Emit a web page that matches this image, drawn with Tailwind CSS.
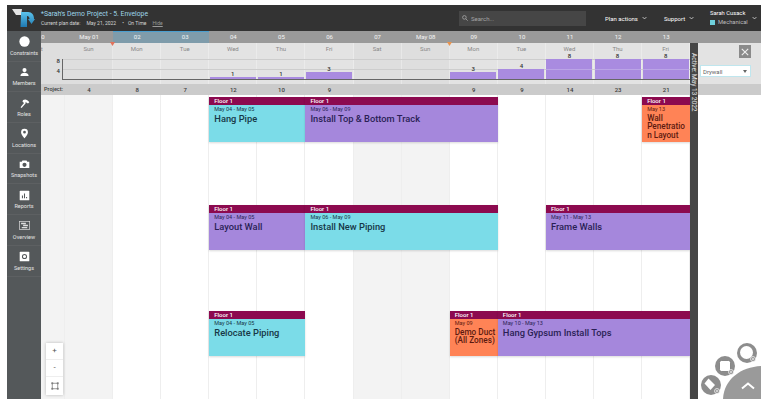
<!DOCTYPE html>
<html lang="en">
<head>
  <meta charset="UTF-8">
  <title>Sarah's Demo Project - Plan</title>
  <meta name="viewport" content="width=device-width, initial-scale=1">
  <script src="https://cdn.jsdelivr.net/npm/@tailwindcss/browser@4"></script>
</head>
<body class="bg-white font-['Roboto',sans-serif] overflow-hidden">
  <div class="ml-[7px] mt-[5px] w-[754px] h-[394px] flex flex-col overflow-hidden relative">

    <!-- top bar -->
    <header class="h-[26px] shrink-0 bg-[#333333] flex items-center text-white">
      <svg class="ml-[5px] w-[23px] h-[20px]" viewBox="0 0 23 20">
        <defs><linearGradient id="logo" x1="0" y1="0" x2="0" y2="1"><stop offset="0" stop-color="#5cc3ec"/><stop offset="1" stop-color="#1f78b0"/></linearGradient></defs>
        <path d="M0 1h10l-1 6H4z" fill="#e4e4e4"/>
        <path d="M9 4h7c4 0 6 3 6 7l1 0-3.500 5L16 11h1.500c0-2-1-3-2.500-3v11H8.500L9 7z" fill="url(#logo)"/>
      </svg>
      <div class="ml-[6px] w-[418px]">
        <div class="text-[6.8px] leading-[10px] text-[#9fd6ea]">*Sarah's Demo Project - 5. Envelope</div>
        <div class="text-[5px] leading-[8px] text-[#d5d5d5] flex gap-[6px]">
          <span>Current plan date:</span><span>May 21, 2022</span><span>•</span><span class="-ml-[2px]">On Time</span><span class="underline text-[#999]">Hide</span>
        </div>
      </div>
      <div class="w-[127px] h-[15px] bg-[#464646] flex items-center gap-[3px] pl-[3px] text-[6px] text-[#a5a5a5]">
        <svg class="w-[6px] h-[6px]" viewBox="0 0 10 10" fill="none" stroke="#a5a5a5" stroke-width="1.4"><circle cx="4" cy="4" r="3"/><path d="M6.500 6.500 9.500 9.500"/></svg>
        Search...
      </div>
      <div class="ml-[19px] w-[59px] flex items-center gap-[4px] text-[6px]">Plan actions
        <svg class="w-[5px] h-[4px]" viewBox="0 0 8 6" fill="none" stroke="#ddd" stroke-width="1.3"><path d="M1 1.500 4 4.500 7 1.500"/></svg>
      </div>
      <div class="w-[46px] flex items-center gap-[4px] text-[6px]">Support
        <svg class="w-[5px] h-[4px]" viewBox="0 0 8 6" fill="none" stroke="#ddd" stroke-width="1.3"><path d="M1 1.500 4 4.500 7 1.500"/></svg>
      </div>
      <div class="w-[42px] text-[5.8px] leading-[9px]">
        <div>Sarah Cusack</div>
        <div class="flex items-center gap-[3px] text-[#bdbdbd]"><span class="w-[5px] h-[5px] bg-[#6fd0dc]"></span>Mechanical</div>
      </div>
      <svg class="w-[5px] h-[4px]" viewBox="0 0 8 6" fill="none" stroke="#ddd" stroke-width="1.3"><path d="M1 1.500 4 4.500 7 1.500"/></svg>
    </header>

    <div class="flex-1 flex min-h-0">
      <!-- sidebar -->
      <nav id="nav" class="w-[34px] shrink-0 bg-[#54585a] flex flex-col text-[5.5px] text-[#e4e4e4] text-center"></nav>

      <main class="flex-1 relative min-w-0 flex flex-col">
        <div id="dates" class="h-[12px] shrink-0 grid grid-cols-[24px_repeat(13,48.1px)_8px_1fr] text-[6px] text-white/90 bg-[#9a9a9a]"></div>
        <div id="chart" class="h-[41px] shrink-0 grid grid-cols-[24px_repeat(13,48.1px)_8px_1fr] bg-[#e3e3e3] relative"></div>
        <div id="project" class="h-[11px] shrink-0 grid grid-cols-[24px_repeat(13,48.1px)_8px_1fr] bg-[#cbcbcb] text-[6px] font-medium text-[#3c3c3c]"></div>

        <!-- calendar -->
        <div class="flex-1 relative min-h-0">
          <div id="cols" class="absolute inset-0 grid grid-cols-[24px_repeat(13,48.1px)_8px_1fr]"></div>
          <div class="relative flex flex-col pt-[2px] text-[#2a1f55]">

            <div class="grid grid-cols-[24px_repeat(13,48.1px)_8px_1fr] h-[45px]">
              <div class="col-start-5 col-span-2 bg-[#7bdce8] text-[#173746] shadow-[0_1px_2px_rgba(0,0,0,0.15)]">
                <div class="h-[8px] bg-[#8c0a4f] text-white text-[6px] leading-[8px] font-medium pl-[5px]">Floor 1</div>
                <div class="pl-[5px] text-[5.5px] leading-[7px] mt-[0.5px]">May 04 - May 05</div>
                <div class="pl-[5px] text-[9.3px] leading-[10px] font-medium mt-[1px]">Hang Pipe</div>
              </div>
              <div class="col-span-4 col-start-7 bg-[#a587dc] -mr-[0.5px] shadow-[0_1px_2px_rgba(0,0,0,0.15)]">
                <div class="h-[8px] bg-[#8c0a4f] text-white text-[6px] leading-[8px] font-medium pl-[5px]">Floor 1</div>
                <div class="pl-[5px] text-[5.5px] leading-[7px] mt-[0.5px]">May 06 - May 09</div>
                <div class="pl-[5px] text-[9.3px] leading-[10px] font-medium mt-[1px]">Install Top &amp; Bottom Track</div>
              </div>
              <div class="col-start-14 bg-[#ff8356] text-[#5c1a10] shadow-[0_1px_2px_rgba(0,0,0,0.15)]">
                <div class="h-[8px] bg-[#8c0a4f] text-white text-[6px] leading-[8px] font-medium pl-[5px]">Floor 1</div>
                <div class="pl-[5px] text-[5.5px] leading-[7px] mt-[0.5px]">May 13</div>
                <div class="pl-[5px] pr-[3px] text-[8.2px] leading-[8.5px] font-medium break-words mt-[1px]">Wall Penetration Layout</div>
              </div>
            </div>

            <div class="grid grid-cols-[24px_repeat(13,48.1px)_8px_1fr] h-[45px] mt-[63px]">
              <div class="col-start-5 col-span-2 bg-[#a587dc] shadow-[0_1px_2px_rgba(0,0,0,0.15)]">
                <div class="h-[8px] bg-[#8c0a4f] text-white text-[6px] leading-[8px] font-medium pl-[5px]">Floor 1</div>
                <div class="pl-[5px] text-[5.5px] leading-[7px] mt-[0.5px]">May 04 - May 05</div>
                <div class="pl-[5px] text-[9.3px] leading-[10px] font-medium mt-[1px]">Layout Wall</div>
              </div>
              <div class="col-span-4 col-start-7 bg-[#7bdce8] text-[#173746] -mr-[0.5px] shadow-[0_1px_2px_rgba(0,0,0,0.15)]">
                <div class="h-[8px] bg-[#8c0a4f] text-white text-[6px] leading-[8px] font-medium pl-[5px]">Floor 1</div>
                <div class="pl-[5px] text-[5.5px] leading-[7px] mt-[0.5px]">May 06 - May 09</div>
                <div class="pl-[5px] text-[9.3px] leading-[10px] font-medium mt-[1px]">Install New Piping</div>
              </div>
              <div class="col-start-12 col-span-3 bg-[#a587dc] shadow-[0_1px_2px_rgba(0,0,0,0.15)]">
                <div class="h-[8px] bg-[#8c0a4f] text-white text-[6px] leading-[8px] font-medium pl-[5px]">Floor 1</div>
                <div class="pl-[5px] text-[5.5px] leading-[7px] mt-[0.5px]">May 11 - May 13</div>
                <div class="pl-[5px] text-[9.3px] leading-[10px] font-medium mt-[1px]">Frame Walls</div>
              </div>
            </div>

            <div class="grid grid-cols-[24px_repeat(13,48.1px)_8px_1fr] h-[45px] mt-[61px]">
              <div class="col-start-5 col-span-2 bg-[#7bdce8] text-[#173746] shadow-[0_1px_2px_rgba(0,0,0,0.15)]">
                <div class="h-[8px] bg-[#8c0a4f] text-white text-[6px] leading-[8px] font-medium pl-[5px]">Floor 1</div>
                <div class="pl-[5px] text-[5.5px] leading-[7px] mt-[0.5px]">May 04 - May 05</div>
                <div class="pl-[5px] text-[9.3px] leading-[10px] font-medium mt-[1px]">Relocate Piping</div>
              </div>
              <div class="col-start-10 bg-[#ff8356] text-[#5c1a10] shadow-[0_1px_2px_rgba(0,0,0,0.15)]">
                <div class="h-[8px] bg-[#8c0a4f] text-white text-[6px] leading-[8px] font-medium pl-[5px]">Floor 1</div>
                <div class="pl-[5px] text-[5.5px] leading-[7px] mt-[0.5px]">May 09</div>
                <div class="pl-[5px] text-[8.2px] leading-[8.5px] font-medium whitespace-nowrap mt-[1px]">Demo Duct<br>(All Zones)</div>
              </div>
              <div class="col-start-11 col-span-4 bg-[#a587dc] shadow-[0_1px_2px_rgba(0,0,0,0.15)]">
                <div class="h-[8px] bg-[#8c0a4f] text-white text-[6px] leading-[8px] font-medium pl-[5px]">Floor 1</div>
                <div class="pl-[5px] text-[5.5px] leading-[7px] mt-[0.5px]">May 10 - May 13</div>
                <div class="pl-[5px] text-[9.3px] leading-[10px] font-medium mt-[1px]">Hang Gypsum Install Tops</div>
              </div>
            </div>
          </div>

          <!-- zoom buttons -->
          <div class="absolute left-[5px] top-[248px] w-[17px] h-[52px] bg-white shadow-[0_0_3px_rgba(0,0,0,0.25)] flex flex-col items-center text-[8px] text-[#555]">
            <div class="h-[17px] w-full flex items-center justify-center border-b border-[#eee]">+</div>
            <div class="h-[17px] w-full flex items-center justify-center border-b border-[#eee]">-</div>
            <div class="flex-1 flex items-center justify-center">
              <svg class="w-[8px] h-[8px]" viewBox="0 0 10 10" fill="none" stroke="#777" stroke-width="0.9"><rect x="1.500" y="1.500" width="7" height="7"/><path d="M0 1.500h3M1.500 0v3M7 1.500h3M8.500 0v3M0 8.500h3M1.500 7v3M7 8.500h3M8.500 7v3"/></svg>
            </div>
          </div>
        </div>

        <!-- active date bar -->
        <div class="absolute left-[649px] top-[12px] bottom-0 w-[8px] bg-[#454545] z-10">
          <div class="[writing-mode:vertical-rl] text-[6.5px] leading-[8px] text-[#e8e8e8] pt-[10px] whitespace-nowrap">Active: May 13 2022</div>
        </div>

        <!-- close + trade filter -->
        <div class="absolute left-[698px] top-[14px] w-[12px] h-[13px] bg-[#8a8a8a] flex items-center justify-center z-10">
          <svg class="w-[8px] h-[8px]" viewBox="0 0 10 10" stroke="#eee" stroke-width="1.4"><path d="M1 1 9 9M9 1 1 9"/></svg>
        </div>
        <div class="absolute left-[659px] top-[34px] w-[51px] h-[12px] bg-white border border-[#bfe6ee] flex items-center justify-between px-[2px] text-[6px] text-[#666] z-10">
          Drywall
          <svg class="w-[4px] h-[3px] mr-[1px]" viewBox="0 0 4 3" fill="#666"><path d="M0 0h4L2 3z"/></svg>
        </div>

        <!-- date markers -->
        <svg class="absolute left-[69px] top-[11px] w-[5px] h-[4px] z-10" viewBox="0 0 5 4" fill="#e2725b"><path d="M0 0h5L2.500 4z"/></svg>
        <svg class="absolute left-[406px] top-[11px] w-[5px] h-[4px] z-10" viewBox="0 0 5 4" fill="#e8934f"><path d="M0 0h5L2.500 4z"/></svg>
      </main>
    </div>

    <!-- quick add menu -->
    <svg class="absolute right-0 bottom-0 w-[62px] h-[58px]" viewBox="0 0 62 58" fill="none">
      <path d="M62 58H24C25 38 42 26 62 25z" fill="#9a9a9a"/>
      <path d="M43 47.500l6-5 6 5" stroke="#fff" stroke-width="2"/>
      <circle cx="12" cy="44" r="10" fill="#8d8d8d"/>
      <path d="M9.500 37.500l6.500 6.500-4.500 5-6-6.500z" fill="#fff"/>
      <circle cx="26" cy="25" r="10" fill="#8d8d8d"/>
      <rect x="20.500" y="19.500" width="11" height="11" rx="2" fill="#fff" stroke="#6d6d6d" stroke-width="0.7"/>
      <circle cx="48" cy="12" r="10" fill="#8d8d8d"/>
      <circle cx="47.500" cy="11.500" r="6.500" fill="#fff"/>
      <g stroke="#fff" stroke-width="0.7">
        <circle cx="18" cy="50" r="2.500" fill="#8d8d8d"/><path d="M16.800 50h2.400M18 48.800v2.400"/>
        <circle cx="32" cy="31" r="2.500" fill="#8d8d8d"/><path d="M30.800 31h2.400M32 29.800v2.400"/>
        <circle cx="54" cy="18" r="2.500" fill="#8d8d8d"/><path d="M52.800 18h2.400M54 16.800v2.400"/>
      </g>
    </svg>
  </div>

  <script>
    // sidebar
    const icons = {
      Constraints: '<circle cx="8" cy="8" r="7.500" fill="#fff"/>',
      Members: '<circle cx="8" cy="4.500" r="3" fill="#fff"/><path d="M2 13c0-3 3-4.500 6-4.500s6 1.500 6 4.500z" fill="#fff"/>',
      Roles: '<path d="M3 14 9 7" stroke="#fff" stroke-width="2"/><path d="M6 3c3-2 6-1 9 3l-2 2-3-2-2 2-3-3z" fill="#fff"/>',
      Locations: '<path fill-rule="evenodd" d="M8 1a5 5 0 0 1 5 5c0 3.500-5 9-5 9S3 9.500 3 6a5 5 0 0 1 5-5zm0 3a2 2 0 1 0 0 4 2 2 0 0 0 0-4z" fill="#fff"/>',
      Snapshots: '<path fill-rule="evenodd" d="M1 4h3l1-2h6l1 2h3v9H1zm7 1.500a3 3 0 1 0 0 6 3 3 0 0 0 0-6z" fill="#fff"/>',
      Reports: '<rect x="1" y="1" width="14" height="14" rx="1" fill="#fff"/><path d="M5 8v4M8 5v7M11 10v2" stroke="#54585a" stroke-width="1.500"/>',
      Overview: '<rect x="0.500" y="2" width="15" height="12" fill="none" stroke="#ddd"/><path d="M3 5h7M6 8h7M4 11h8" stroke="#ddd" stroke-width="2"/>',
      Settings: '<rect x="1" y="1" width="14" height="14" rx="1" fill="#fff"/><circle cx="8" cy="8" r="3" fill="none" stroke="#54585a" stroke-width="1.500"/>'
    };
    document.getElementById("nav").innerHTML = Object.keys(icons).map(name => `
      <div class="h-[30.7px] flex flex-col items-center justify-end pb-[4px] gap-[2.5px] border-b border-white/5">
        <svg class="w-[11px] h-[11px]" viewBox="0 0 16 16">${icons[name]}</svg>
        <span class="leading-[7px]">${name}</span>
      </div>`).join("");

    // one entry per grid column: partial Sat, then May 01 - May 13
    const dates = ["May 01","02","03","04","05","06","07","May 08","09","10","11","12","13"];
    const days = ["Sun","Mon","Tue","Wed","Thu","Fri","Sat","Sun","Mon","Tue","Wed","Thu","Fri"];
    const loads = [0,0,0,1,1,3,0,0,3,4,8,8,8];
    const totals = ["4","8","7","12","10","9","","","9","9","14","23","21"];

    document.getElementById("dates").innerHTML =
      '<div class="overflow-hidden leading-[12px]"><span class="-ml-[3px] inline-block">30</span></div>' +
      dates.map((d, i) => `<div class="text-center leading-[12px] ${i == 1 || i == 2 ? "bg-[#7f9cab] shadow-[inset_0_1px_0_#4a9fd0]" : ""}">${d}</div>`).join("");

    document.getElementById("chart").innerHTML = `
      <div class="overflow-hidden text-[6px] leading-[11px] text-[#888] bg-[#dedede] relative">
        <span class="-ml-[7px] inline-block">Sat</span>
        <span class="absolute right-[5px] top-[12px] text-[#333] font-medium">8</span>
        <span class="absolute right-[5px] top-[22px] text-[#333] font-medium">4</span>
      </div>` +
      days.map((d, i) => {
        const v = loads[i];
        const h = {1: "h-[2.5px]", 3: "h-[7.5px]", 4: "h-[10px]", 8: "h-[20px]"}[v];
        const shade = i == 0 || i == 6 || i == 7 ? "bg-[#dedede]" : "";
        return `<div class="flex flex-col ${shade} border-r border-white/30">
          <div class="h-[16px] shrink-0 text-center text-[6px] leading-[11px] text-[#888]">${d}</div>
          <div class="h-[20px] shrink-0 flex flex-col justify-end items-center relative z-[2]">
            ${v ? `<span class="text-[6px] leading-[7px] font-medium text-[#333]">${v}</span><div class="${h} w-[46px] shrink-0 bg-[#a98be0] relative">${v == 8 ? '<div class="absolute left-0 right-0 top-[10px] h-px bg-[#bba5e6]"></div>' : ""}</div>` : ""}
          </div>
        </div>`;
      }).join("") +
      `<div class="bg-[#454545]"></div><div class="bg-[#e3e3e3]"></div>
      <div class="absolute left-[21px] w-[628px] top-[16px] h-px bg-[#cdcdcd]"></div>
      <div class="absolute left-[21px] w-[628px] top-[26px] h-px bg-[#cdcdcd]"></div>
      <div class="absolute left-[21px] w-[628px] top-[36px] h-px bg-[#666]"></div>
      <div class="absolute left-[21px] w-px top-[16px] h-[20px] bg-[#666]"></div>`;

    document.getElementById("project").innerHTML =
      '<div class="leading-[11px] pl-[3px] text-[5.5px] whitespace-nowrap">Project:</div>' +
      totals.map(t => `<div class="text-center leading-[11px]">${t}</div>`).join("");

    document.getElementById("cols").innerHTML =
      '<div class="bg-[#f3f3f3] border-r border-[#eee]"></div>' +
      days.map((d, i) => `<div class="${i == 0 || i == 6 || i == 7 ? "bg-[#f3f3f3]" : ""} border-r border-[#eee]"></div>`).join("");
  </script>
</body>
</html>
